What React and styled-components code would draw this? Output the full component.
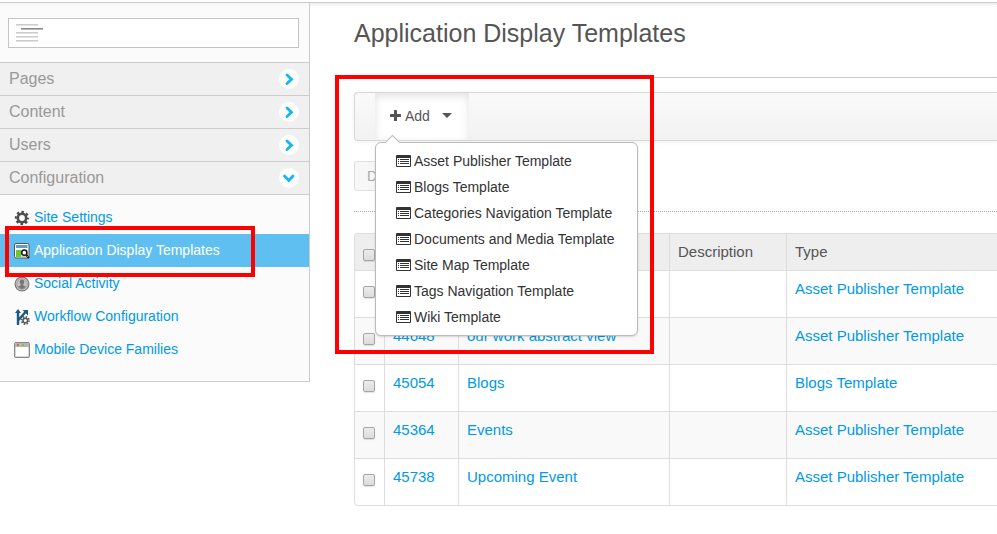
import { useState } from 'react';
import styled, { createGlobalStyle, css } from 'styled-components';

const GlobalStyle = createGlobalStyle`
  * {
    box-sizing: border-box;
  }

  body {
    margin: 0;
    background: #fff;
    color: #555;
    font-family: 'Liberation Sans', Arial, sans-serif;
    font-size: 14px;
    line-height: 20px;
  }

  a {
    color: #009ae5;
    text-decoration: none;
  }
`;

const Page = styled.div`
  padding-top: 2px;
  overflow: hidden;
`;

const Layout = styled.div`
  display: flex;
  align-items: flex-start;
  border-top: 1px solid #ccc;
  box-shadow: inset 0 4px 4px -3px rgba(0, 0, 0, 0.12);
`;

const Sidebar = styled.aside`
  flex: 0 0 310px;
  border-right: 1px solid #ccc;
  border-bottom: 1px solid #ccc;
  background: rgba(250, 250, 250, 0.7);
`;

const SearchBox = styled.div`
  display: flex;
  align-items: center;
  height: 30px;
  margin: 15px 10px 14px 8px;
  padding: 0 7px;
  border: 1px solid #c4c4c4;
  background: #fff;
`;

const SearchInput = styled.input`
  flex: 1;
  min-width: 0;
  border: 0;
  outline: 0;
  background: transparent;
  font: inherit;
`;

const SectionButton = styled.button`
  display: flex;
  align-items: center;
  justify-content: space-between;
  width: 100%;
  height: 33px;
  padding: 0 10px 0 9px;
  border: 0;
  border-top: 1px solid #ccc;
  background: #f0f0f0;
  color: #999;
  font: inherit;
  font-size: 16px;
  cursor: pointer;
`;

const ArrowBadge = styled.svg`
  width: 20px;
  height: 20px;
  border-radius: 50%;
  background: #fff;
  transform: ${({ $open }) => ($open ? 'rotate(90deg)' : 'none')};
`;

const NavList = styled.ul`
  list-style: none;
  margin: 0;
  padding: 6px 0 15px;
  border-top: 1px solid #ccc;
`;

const NavItem = styled.li`
  position: relative;
`;

const NavLink = styled.a`
  display: flex;
  align-items: center;
  gap: 4px;
  height: 33px;
  padding: 0 0 2px 14px;

  ${({ $active }) =>
    $active &&
    css`
      background: #5fbff0;
      color: #fff;
    `}

  svg {
    flex: none;
    margin-top: 3px;
  }
`;

const Highlight = styled.div`
  position: absolute;
  z-index: 20;
  border: 4px solid #f00;
  pointer-events: none;
`;

const NavHighlight = styled(Highlight)`
  top: -8px;
  bottom: -10px;
  left: 5px;
  width: 250px;
`;

const MenuHighlight = styled(Highlight)`
  top: -18px;
  left: -20px;
  width: 319px;
  height: 279px;
`;

const Main = styled.main`
  flex: 1;
  min-width: 0;
  padding: 0 0 28px 44px;
`;

const Title = styled.h1`
  margin: 0;
  padding: 15px 0 29px;
  border-bottom: 1px solid #c8c8c8;
  font-size: 25px;
  font-weight: 400;
  line-height: 30px;
`;

const Toolbar = styled.div`
  position: relative;
  height: 49px;
  margin-top: 14px;
  padding-left: 20px;
  border: 1px solid #d8d8d8;
  border-right: 0;
  border-radius: 4px 0 0 4px;
  background: linear-gradient(#fafafa, #f2f2f2);
  box-shadow: 0 1px 4px rgba(0, 0, 0, 0.07);
`;

const AddButton = styled.button`
  display: flex;
  align-items: center;
  gap: 4px;
  height: 47px;
  width: 94px;
  padding: 0 0 2px 15px;
  border: 0;
  background: #fff;
  box-shadow: inset 0 3px 8px rgba(0, 0, 0, 0.12);
  color: #555;
  font: inherit;
  cursor: pointer;
`;

const Caret = styled.span`
  margin-left: 8px;
  border: 5px solid transparent;
  border-top-color: #555;
  border-bottom: 0;
`;

const Menu = styled.ul`
  position: absolute;
  z-index: 10;
  top: 49px;
  left: 20px;
  width: 263px;
  margin: 0;
  padding: 5px 0;
  list-style: none;
  border: 1px solid #bbb;
  border-radius: 6px;
  background: #fff;
  box-shadow: 0 1px 2px rgba(0, 0, 0, 0.15);

  &::before {
    content: '';
    position: absolute;
    top: -6px;
    left: 11px;
    width: 10px;
    height: 10px;
    border: 1px solid #bbb;
    border-right: 0;
    border-bottom: 0;
    background: #fff;
    transform: rotate(45deg);
  }
`;

const MenuLink = styled.a`
  position: relative;
  display: flex;
  align-items: center;
  gap: 3px;
  height: 26px;
  padding-left: 20px;
  color: #333;
`;

const Actions = styled.div`
  margin-top: 20px;
  padding-bottom: 20px;
  border-bottom: 1px dotted #aaa;
`;

const ActionButton = styled.button`
  display: block;
  height: 30px;
  padding: 0 12px;
  border: 1px solid #e0e0e0;
  border-radius: 2px;
  background: #f7f7f7;
  color: #aaa;
  font: inherit;
`;

const Table = styled.table`
  width: 100%;
  margin-top: 21px;
  table-layout: fixed;
  border-collapse: separate;
  border-spacing: 0;
  border: 1px solid #ddd;
  border-width: 0 0 1px;
  border-radius: 4px 0 0 4px;
  font-size: 15px;

  tbody tr:nth-child(even) td {
    background: #f9f9f9;
  }

  thead tr:first-child th:first-child {
    border-top-left-radius: 4px;
  }

  tbody tr:last-child td:first-child {
    border-bottom-left-radius: 4px;
  }
`;

const Col = styled.col`
  width: ${({ $width }) => ($width ? `${$width}px` : 'auto')};
`;

const cell = css`
  padding: 8px;
  border: 1px solid #ddd;
  border-width: 1px 0 0 1px;
  text-align: left;
  vertical-align: top;
`;

const HeadCell = styled.th`
  ${cell}
  height: 37px;
  background: #eee;
  font-weight: 400;
`;

const Cell = styled.td`
  ${cell}
  height: 47px;
`;

const Checkbox = styled.input`
  display: block;
  appearance: none;
  width: 12px;
  height: 12px;
  margin: 7px 0 0;
  border: 1px solid #a6a6a6;
  border-radius: 2px;
  background: linear-gradient(#ececec, #dcdcdc);
  box-shadow: 0 1px 1px rgba(0, 0, 0, 0.12);
`;

const PlusIcon = () => (
  <svg width="11" height="11" viewBox="0 0 11 11" fill="#555" aria-hidden="true">
    <rect x="4" width="3" height="11" rx=".5" />
    <rect y="4" width="11" height="3" rx=".5" />
  </svg>
);

const ListIcon = () => (
  <svg width="15" height="12" viewBox="0 0 15 12" fill="#333" aria-hidden="true">
    <path
      fillRule="evenodd"
      d="M1 0h13a1 1 0 0 1 1 1v10a1 1 0 0 1-1 1H1a1 1 0 0 1-1-1V1a1 1 0 0 1 1-1zM1 3v8h13V3z"
    />
    <path d="M2 4h1v1H2zM4 4h9v1H4zM2 6h1v1H2zM4 6h9v1H4zM2 8h1v1H2zM4 8h9v1H4z" />
  </svg>
);

const HierarchyIcon = () => (
  <svg width="27" height="18" viewBox="0 0 27 18" aria-hidden="true">
    <path d="M0 0h22v1H0zM0 8h22v1H0zM0 12h22v1H0zM0 16h22v1H0z" fill="#ccc" />
    <path d="M0 1h22v1H0zM0 9h22v1H0zM0 13h22v1H0zM0 17h22v1H0z" fill="#e2e2e2" />
    <path d="M5 4h22v1H5z" fill="#888" />
    <path d="M5 5h22v1H5z" fill="#bbb" />
  </svg>
);

const GearIcon = () => (
  <svg width="16" height="16" viewBox="0 0 16 16" fill="none" stroke="#4d4d4d" aria-hidden="true">
    <circle cx="8" cy="8" r="4.2" strokeWidth="2.6" />
    <circle cx="8" cy="8" r="6" strokeWidth="2.4" strokeDasharray="2.5 2.212" strokeDashoffset="1.25" />
  </svg>
);

const TemplateIcon = () => (
  <svg width="16" height="16" viewBox="0 0 16 16" aria-hidden="true">
    <rect x=".5" y=".5" width="14.5" height="14.5" rx="1.5" fill="#fff" stroke="#555" />
    <path d="M2 2h11.500v3H2z" fill="#6598cf" />
    <path d="M2 7h5v7H2z" fill="#6fc52f" />
    <path d="M7.500 7h6v7h-6z" fill="#ccc" />
    <circle cx="10.300" cy="9.700" r="2.600" fill="#fff" stroke="#111" strokeWidth="1.500" />
    <path d="M12.300 11.800l2.700 3.200" stroke="#111" strokeWidth="2" />
    <path d="M13.200 12.800l1 1.200" stroke="#e9a83a" />
  </svg>
);

const PersonIcon = () => (
  <svg width="16" height="16" viewBox="0 0 16 16" aria-hidden="true">
    <circle cx="8" cy="8" r="6.900" fill="#d8d8d8" stroke="#777" strokeWidth="1.200" />
    <circle cx="8" cy="8" r="5.300" fill="#c4c4c4" stroke="#8a8a8a" strokeWidth=".7" />
    <path
      d="M8 3.500c1.500 0 2.300 1 2.300 2.300 0 1.100-.5 1.900-1.100 2.400v1.100l2.600 1.200A5 5 0 0 1 8 12.900a5 5 0 0 1-3.800-2.400l2.600-1.200V8.200c-.6-.5-1.100-1.300-1.100-2.400C5.700 4.500 6.500 3.500 8 3.500z"
      fill="#777"
    />
  </svg>
);

const WorkflowIcon = () => (
  <svg width="16" height="16" viewBox="0 0 16 16" fill="none" aria-hidden="true">
    <path d="M4 16V3M4.500 11L11.500 3" stroke="#1b5a80" strokeWidth="2.400" />
    <path d="M1 4l3-4 3 4zM8.500 1H14v5.500z" fill="#1b5a80" />
    <circle cx="11.300" cy="11.500" r="2.300" stroke="#555" strokeWidth="1.500" />
    <circle cx="11.300" cy="11.500" r="3.700" stroke="#555" strokeWidth="1.700" strokeDasharray="1.450 1.456" />
  </svg>
);

const WindowIcon = () => (
  <svg width="16" height="16" viewBox="0 0 16 16" aria-hidden="true">
    <rect x=".5" y=".5" width="15" height="15" rx="1.500" fill="#d8d8d8" stroke="#888" />
    <path d="M1 1h14v4H1z" fill="#b5b5b5" />
    <rect x="2" y="5" width="12" height="9" rx=".5" fill="#fff" />
    <circle cx="4" cy="3" r="1" fill="#e8483c" />
    <circle cx="6.500" cy="3" r="1" fill="#e8c33c" />
    <circle cx="9" cy="3" r="1" fill="#61c144" />
  </svg>
);

const sections = ['Pages', 'Content', 'Users', 'Configuration'];

const navItems = [
  { label: 'Site Settings', Icon: GearIcon },
  { label: 'Application Display Templates', Icon: TemplateIcon, active: true },
  { label: 'Social Activity', Icon: PersonIcon },
  { label: 'Workflow Configuration', Icon: WorkflowIcon },
  { label: 'Mobile Device Families', Icon: WindowIcon },
];

const templateTypes = [
  'Asset Publisher Template',
  'Blogs Template',
  'Categories Navigation Template',
  'Documents and Media Template',
  'Site Map Template',
  'Tags Navigation Template',
  'Wiki Template',
];

const templates = [
  { id: '', name: '', type: 'Asset Publisher Template' },
  { id: '44648', name: 'our work abstract view', type: 'Asset Publisher Template' },
  { id: '45054', name: 'Blogs', type: 'Blogs Template' },
  { id: '45364', name: 'Events', type: 'Asset Publisher Template' },
  { id: '45738', name: 'Upcoming Event', type: 'Asset Publisher Template' },
];

const SiteMenu = () => {
  const [open, setOpen] = useState('Configuration');

  return (
    <Sidebar>
      <SearchBox>
        <HierarchyIcon />
        <SearchInput type="text" aria-label="Search sites" />
      </SearchBox>
      {sections.map(section => (
        <SectionButton
          key={section}
          type="button"
          aria-expanded={open === section}
          onClick={() => setOpen(section)}
        >
          {section}
          <ArrowBadge viewBox="0 0 20 20" $open={open === section} aria-hidden="true">
            <path
              d="M8 6l4.500 4.200L8 14.500"
              fill="none"
              stroke="#13b9ec"
              strokeWidth="2.800"
              strokeLinecap="round"
            />
          </ArrowBadge>
        </SectionButton>
      ))}
      {open === 'Configuration' && (
        <NavList>
          {navItems.map(({ label, Icon, active }) => (
            <NavItem key={label}>
              <NavLink href="#" $active={active}>
                <Icon />
                {label}
              </NavLink>
              {active && <NavHighlight />}
            </NavItem>
          ))}
        </NavList>
      )}
    </Sidebar>
  );
};

const AddMenu = () => {
  const [open, setOpen] = useState(true);

  return (
    <Toolbar>
      <AddButton type="button" aria-expanded={open} onClick={() => setOpen(!open)}>
        <PlusIcon />
        Add
        <Caret />
      </AddButton>
      {open && (
        <Menu>
          {templateTypes.map(type => (
            <li key={type}>
              <MenuLink href="#">
                <ListIcon />
                {type}
              </MenuLink>
            </li>
          ))}
        </Menu>
      )}
      <MenuHighlight />
    </Toolbar>
  );
};

const TemplateTable = () => (
  <Table>
    <colgroup>
      <Col $width={30} />
      <Col $width={74} />
      <Col $width={211} />
      <Col $width={117} />
      <Col />
    </colgroup>
    <thead>
      <tr>
        <HeadCell>
          <Checkbox type="checkbox" aria-label="Select all" />
        </HeadCell>
        <HeadCell aria-label="ID" />
        <HeadCell aria-label="Name" />
        <HeadCell>Description</HeadCell>
        <HeadCell>Type</HeadCell>
      </tr>
    </thead>
    <tbody>
      {templates.map(({ id, name, type }, index) => (
        <tr key={index}>
          <Cell>
            <Checkbox type="checkbox" aria-label={`Select ${name || 'template'}`} />
          </Cell>
          <Cell>{id && <a href="#">{id}</a>}</Cell>
          <Cell>{name && <a href="#">{name}</a>}</Cell>
          <Cell />
          <Cell>
            <a href="#">{type}</a>
          </Cell>
        </tr>
      ))}
    </tbody>
  </Table>
);

const App = () => (
  <Page>
    <GlobalStyle />
    <Layout>
      <SiteMenu />
      <Main>
        <Title>Application Display Templates</Title>
        <AddMenu />
        <Actions>
          <ActionButton type="button" disabled>
            Delete
          </ActionButton>
        </Actions>
        <TemplateTable />
      </Main>
    </Layout>
  </Page>
);

export default App;
